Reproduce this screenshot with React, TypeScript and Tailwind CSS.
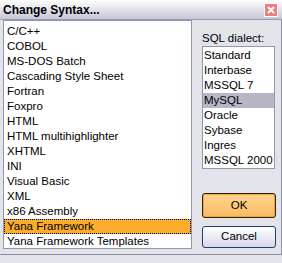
import React from "react";

const languages = [
  "C/C++",
  "COBOL",
  "MS-DOS Batch",
  "Cascading Style Sheet",
  "Fortran",
  "Foxpro",
  "HTML",
  "HTML multihighlighter",
  "XHTML",
  "INI",
  "Visual Basic",
  "XML",
  "x86 Assembly",
  "Yana Framework",
  "Yana Framework Templates",
];

const dialects = ["Standard", "Interbase", "MSSQL 7", "MySQL", "Oracle", "Sybase", "Ingres", "MSSQL 2000"];

export default function App() {
  return (
    <div
      className="w-[282px] h-[263px] flex flex-col bg-[#e3e3ea] text-black overflow-hidden"
      style={{ fontFamily: '"Liberation Sans", Arial, sans-serif' }}
    >
      {/* Title bar */}
      <div className="h-[20px] shrink-0 flex items-center justify-between pl-[3px] pr-[4px] bg-gradient-to-b from-[#ffffff] to-[#c6c6d6] border-b border-[#9a9ab0]">
        <span className="text-[12px] font-bold leading-none">Change Syntax...</span>
        <div className="w-[14px] h-[14px] bg-[#ef7d7d] border border-white flex items-center justify-center">
          <svg width="8" height="8" viewBox="0 0 8 8">
            <path d="M1 1L7 7M7 1L1 7" stroke="#fff" strokeWidth="2" />
          </svg>
        </div>
      </div>

      {/* Body */}
      <div className="flex-1 flex pl-[3px] pr-[4px] border-b border-[#8e8ea0] mb-[8px] border-r border-r-[#8e8ea0]">
        {/* Language list */}
        <div className="w-[189px] h-[229px] bg-white border border-[#8a9ab4] pt-[3px] text-[11.5px] whitespace-nowrap">
          {languages.map((l) => (
            <div
              key={l}
              className={
                l === "Yana Framework"
                  ? "h-[15px] leading-[15px] pl-[3px] bg-[#fbae2e] outline-1 outline-dotted outline-black -outline-offset-1"
                  : "h-[15px] leading-[15px] pl-[3px]"
              }
            >
              {l}
            </div>
          ))}
        </div>

        {/* Right column */}
        <div className="flex-1 flex flex-col pl-[10px] pt-[12px]">
          <div className="text-[11.5px] leading-[13px] h-[14px]">SQL dialect:</div>
          <div className="w-[73px] h-[123px] bg-white border border-[#8a9ab4] pt-[1px] text-[11.5px] whitespace-nowrap">
            {dialects.map((d) => (
              <div
                key={d}
                className={
                  d === "MySQL"
                    ? "h-[15px] leading-[15px] pl-[1px] bg-[#b6b6c6]"
                    : "h-[15px] leading-[15px] pl-[1px]"
                }
              >
                {d}
              </div>
            ))}
          </div>

          <button className="mt-[24px] w-[74px] h-[25px] rounded-[3px] border border-[#2a2410] bg-gradient-to-b from-[#fed592] to-[#f9bb62] shadow-[inset_0_0_0_1px_#f5a431] text-[11.5px]">
            OK
          </button>
          <button className="mt-[8px] w-[74px] h-[22px] rounded-[3px] border border-[#1b3f73] bg-gradient-to-b from-[#ffffff] to-[#d8d8e6] text-[11.5px]">
            Cancel
          </button>
        </div>
      </div>
    </div>
  );
}
